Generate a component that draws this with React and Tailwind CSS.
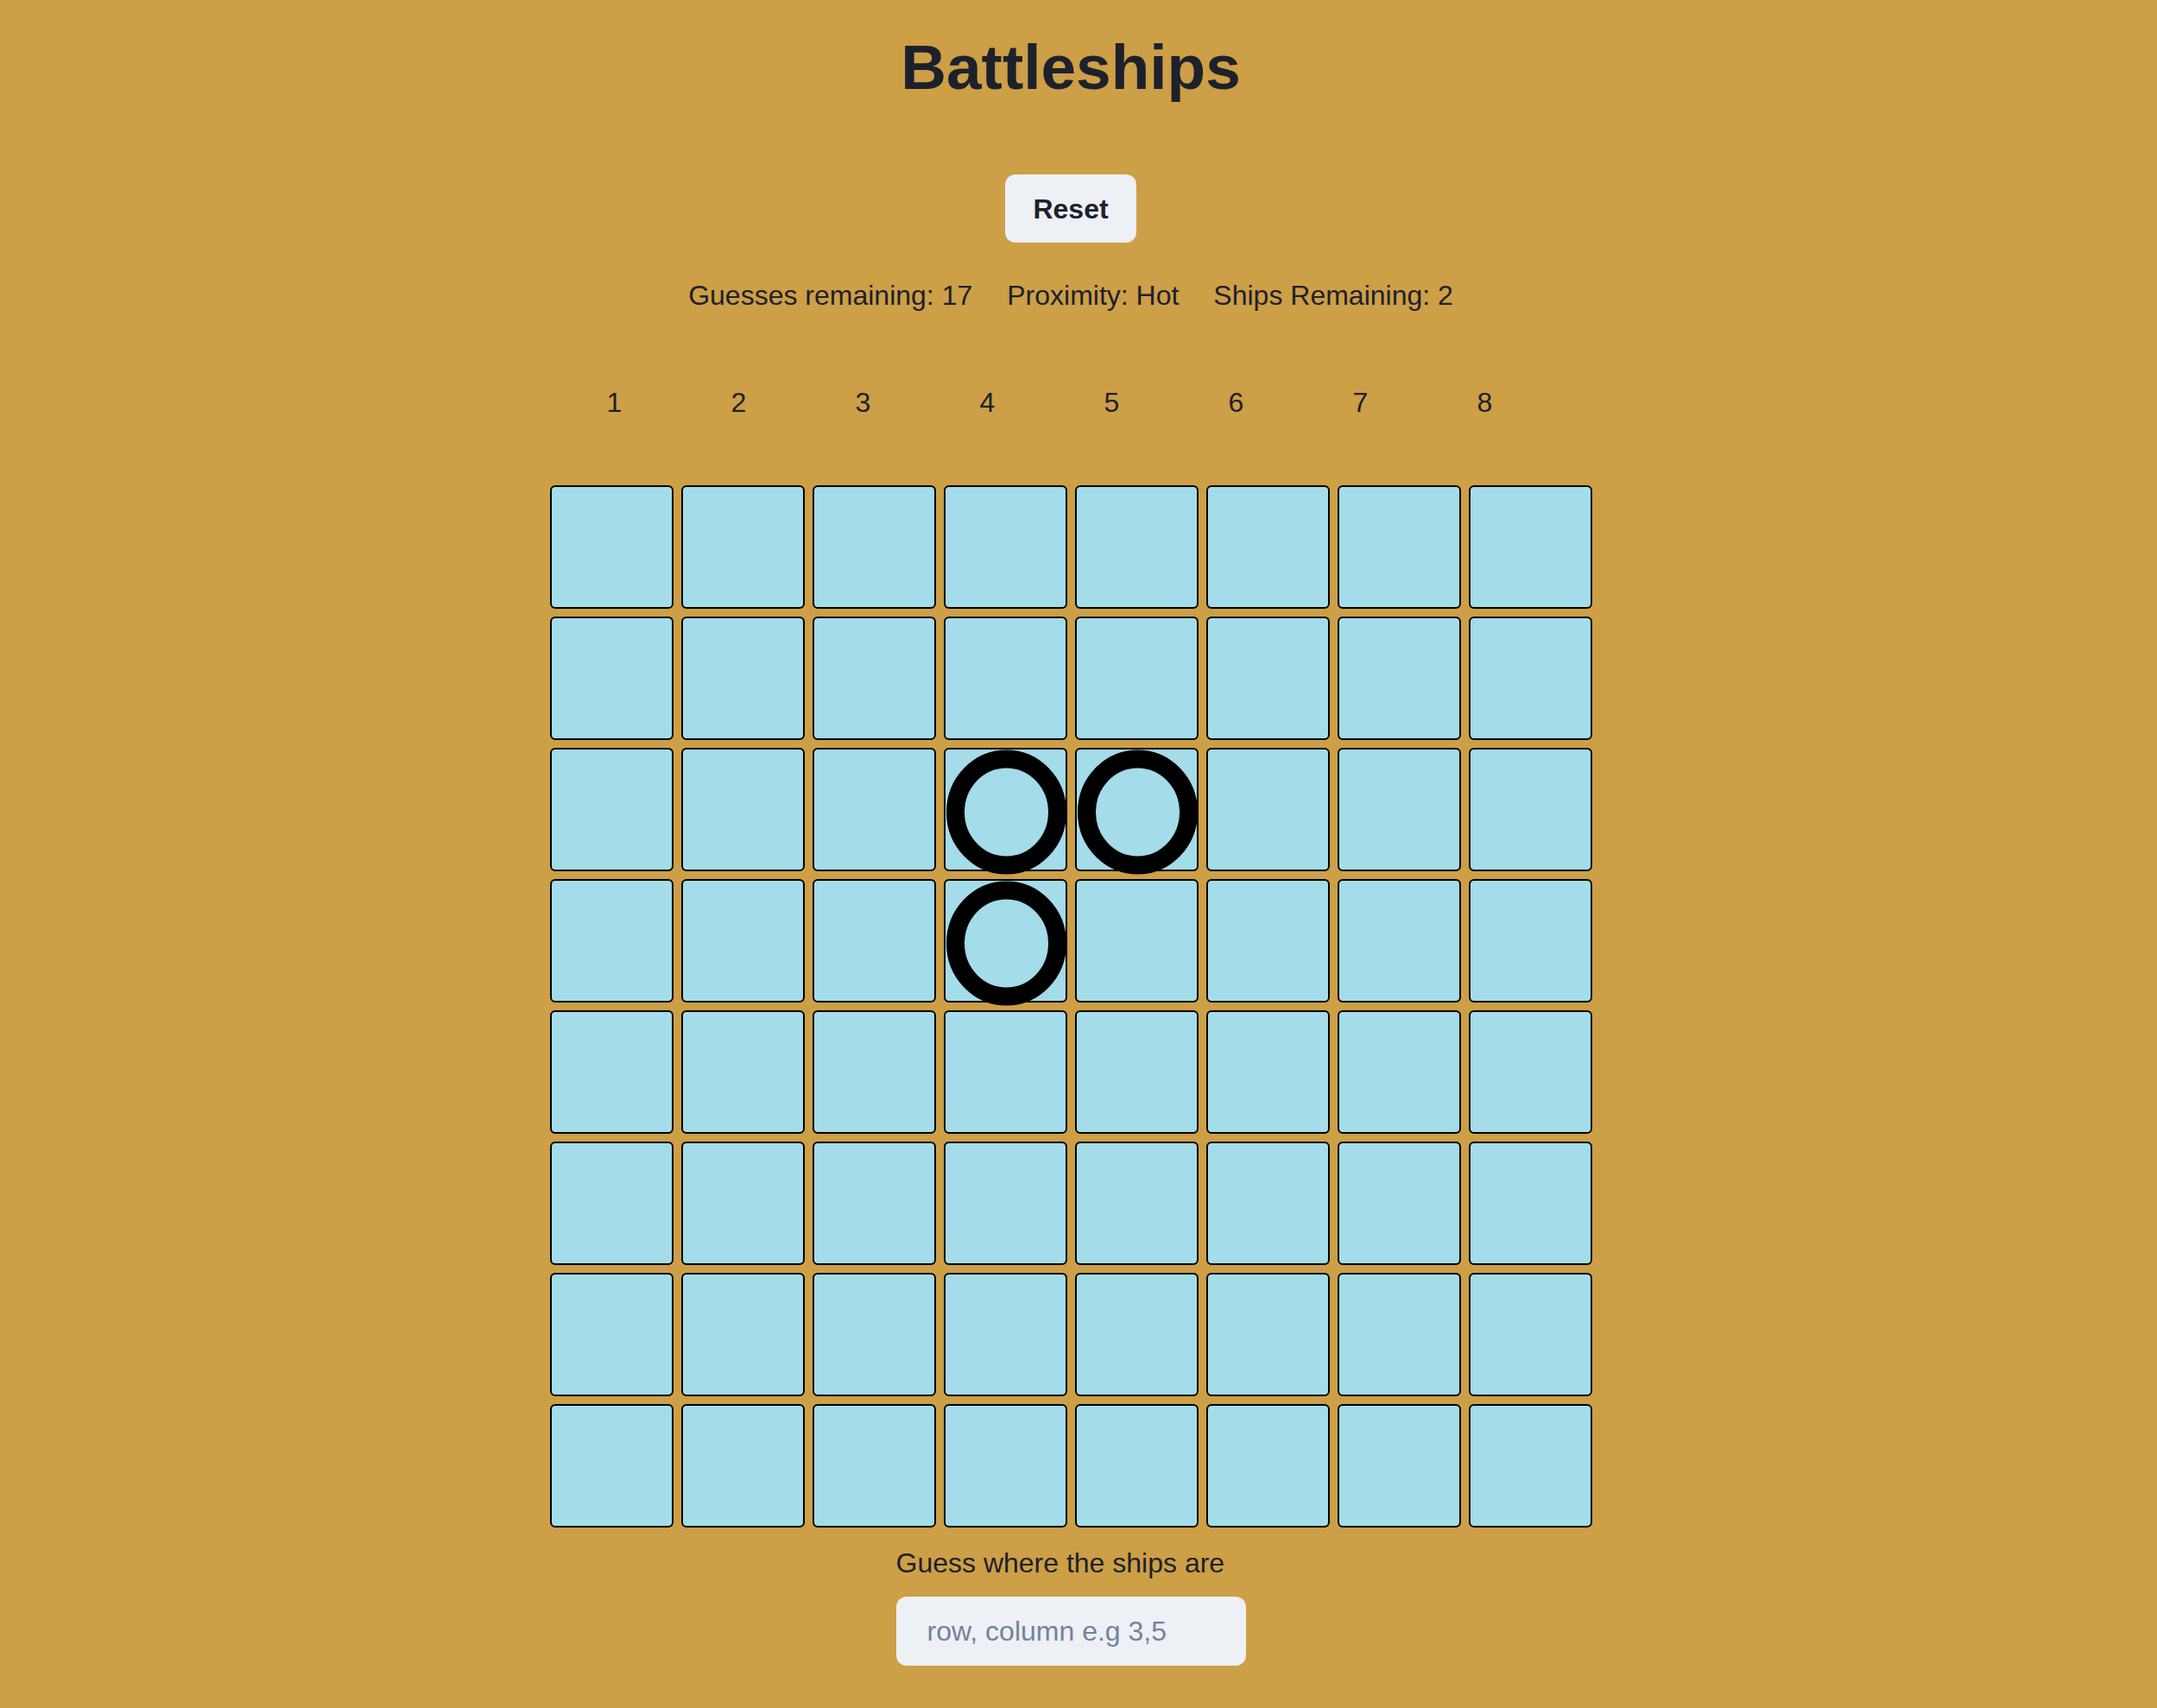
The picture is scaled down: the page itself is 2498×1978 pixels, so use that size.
import React from 'react';

const hits = ['2-3', '2-4', '3-3'];

const Cell = ({ hit }) => (
  <div className="relative w-[143px] h-[143px] rounded-[6px] border-2 border-black bg-[#a4dcea]">
    {hit && (
      <svg className="absolute left-0 top-0 overflow-visible" width="143" height="143" viewBox="0 0 143 143">
        <ellipse cx="70.5" cy="72.5" rx="59" ry="61.5" fill="none" stroke="#000" strokeWidth="21" />
      </svg>
    )}
  </div>
);

const App = () => {
  const rows = Array.from({ length: 8 }, (_, r) => r);
  const cols = Array.from({ length: 8 }, (_, c) => c);

  return (
    <div className="min-h-screen w-full bg-[#cd9f46] text-[#1d212c] font-['Liberation_Sans','Arial',sans-serif]">
      <div className="w-[2480px] flex flex-col items-center pt-[41px] pb-[40px]">
        <h1 className="text-[73px] leading-none font-bold">Battleships</h1>

        <button className="mt-[88px] w-[152px] h-[79px] rounded-[12px] bg-[#edf0f5] text-[32px] leading-none font-bold flex items-center justify-center">
          Reset
        </button>

        <div className="mt-[45px] flex gap-[40px] text-[32px] leading-none">
          <span>Guesses remaining: 17</span>
          <span>Proximity: Hot</span>
          <span>Ships Remaining: 2</span>
        </div>

        <div className="w-[1207px] mt-[92px] pl-[3px] flex text-[32px] leading-none">
          {cols.map((c) => (
            <div key={c} className="w-[144px] text-center">{c + 1}</div>
          ))}
        </div>

        <div className="mt-[80px] grid grid-cols-8 gap-[9px]">
          {rows.map((r) =>
            cols.map((c) => <Cell key={`${r}-${c}`} hit={hits.includes(`${r}-${c}`)} />)
          )}
        </div>

        <div className="w-[405px] mt-[25px] flex flex-col">
          <label className="text-[32px] leading-none">Guess where the ships are</label>
          <input
            className="mt-[23px] h-[80px] w-full rounded-[12px] bg-[#edf0f5] px-[36px] text-[32px] outline-none placeholder:text-[#75829a]"
            placeholder="row, column e.g 3,5"
          />
        </div>
      </div>
    </div>
  );
};

export default App;
